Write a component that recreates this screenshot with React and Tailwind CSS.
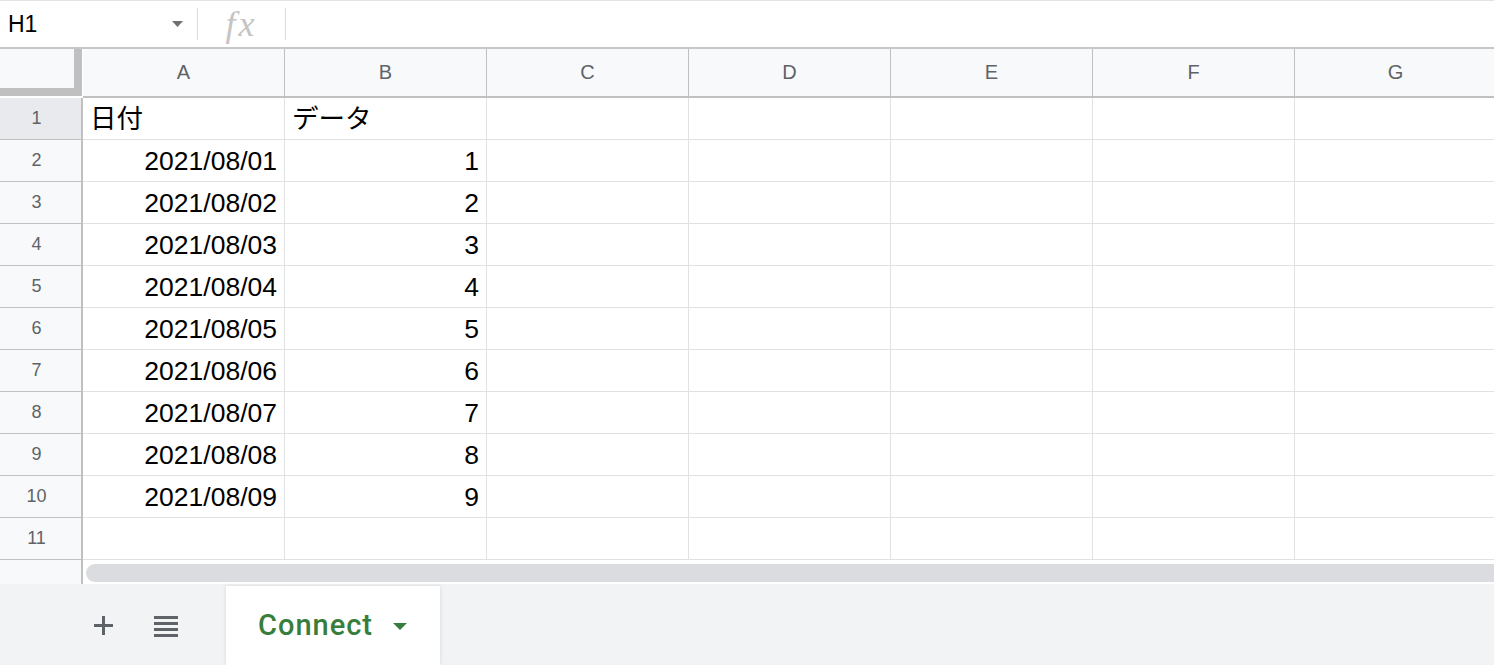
const columns = ['A', 'B', 'C', 'D', 'E', 'F', 'G']

const rows = [
  ['日付', 'データ'],
  ['2021/08/01', '1'],
  ['2021/08/02', '2'],
  ['2021/08/03', '3'],
  ['2021/08/04', '4'],
  ['2021/08/05', '5'],
  ['2021/08/06', '6'],
  ['2021/08/07', '7'],
  ['2021/08/08', '8'],
  ['2021/08/09', '9'],
  [],
]

function FormulaBar() {
  return (
    <div className="flex h-[49px] flex-none items-center border-t border-b-2 border-t-[#e3e3e3] border-b-[#c7c7c7] bg-white">
      <div className="flex w-[197px] items-center justify-between pl-[8px] pr-[14px]">
        <span className="text-[23px] text-black">H1</span>
        <svg width="11" height="6" viewBox="0 0 11 6">
          <path d="M0 0h11L5.5 6z" fill="#707070" />
        </svg>
      </div>
      <div className="h-[32px] w-px bg-[#dadce0]" />
      <div className="flex w-[87px] items-center justify-center">
        <span className="font-['Liberation_Serif',serif] text-[36px] italic leading-none tracking-[3px] text-[#c4c4c4]">fx</span>
      </div>
      <div className="h-[32px] w-px bg-[#dadce0]" />
    </div>
  )
}

function HeaderRow() {
  return (
    <div className="flex h-[49px] flex-none">
      <div className="w-[83px] flex-none bg-white pr-px">
        <div className="h-[47px] border-r-[8px] border-b-[8px] border-[#c0c0c0] bg-[#f8f9fa]" />
      </div>
      {columns.map(c => (
        <div
          key={c}
          className="flex w-[202px] flex-none items-center justify-center border-r border-b-2 border-r-[#c0c0c0] border-b-[#c0c0c0] bg-[#f8f9fa] pb-[1px] text-[20px] text-[#5f6368]"
        >
          {c}
        </div>
      ))}
    </div>
  )
}

function DataRow({ index, values }) {
  const selected = index === 1
  return (
    <div className="flex h-[42px] flex-none">
      <div
        className={`flex w-[83px] flex-none items-center justify-center border-r-2 border-b border-[#c0c0c0] pr-[8px] text-[18px] text-[#5f6368] ${selected ? 'bg-[#e8eaed]' : 'bg-[#f8f9fa]'}`}
      >
        {index}
      </div>
      {columns.map((c, i) => {
        const v = values[i]
        const isHeader = index === 1
        return (
          <div
            key={c}
            className={`flex w-[202px] flex-none items-center border-r border-b border-[#e0e1e2] px-[7px] pt-[2px] text-[26.5px] text-black ${isHeader ? 'justify-start' : 'justify-end'}`}
          >
            {v}
          </div>
        )
      })}
    </div>
  )
}

export default function App() {
  return (
    <div className="flex h-[665px] w-[1494px] flex-col overflow-hidden bg-white font-['Liberation_Sans','Noto_Sans_CJK_JP',Arial,sans-serif]">
      <FormulaBar />
      <HeaderRow />
      {rows.map((r, i) => (
        <DataRow key={i} index={i + 1} values={r} />
      ))}

      <div className="flex h-[24px] flex-none">
        <div className="w-[83px] flex-none border-r-2 border-[#c0c0c0] bg-[#f8f9fa]" />
        <div className="flex-1 bg-white pt-[4px] pl-[3px]">
          <div className="h-[18px] w-[1500px] rounded-l-full bg-[#dadce0]" />
        </div>
      </div>

      <div className="flex flex-1 items-stretch bg-[#f1f3f4] pt-[2px]">
        <div className="flex items-center">
          <svg className="ml-[94px]" width="19" height="19" viewBox="0 0 19 19">
            <rect x="8" y="0" width="3" height="19" fill="#5f6368" />
            <rect x="0" y="8" width="19" height="3" fill="#5f6368" />
          </svg>
          <svg className="ml-[41px]" width="24" height="22" viewBox="0 0 24 22">
            <rect x="0" y="1" width="24" height="3" fill="#5f6368" />
            <rect x="0" y="7" width="24" height="3" fill="#5f6368" />
            <rect x="0" y="13" width="24" height="3" fill="#5f6368" />
            <rect x="0" y="19" width="24" height="3" fill="#5f6368" />
          </svg>
        </div>
        <div className="ml-[48px] flex w-[214px] items-center bg-white pl-[32px] pt-[1px] shadow-[0_0_4px_rgba(0,0,0,0.12)]">
          <span className="font-['Roboto',Arial,sans-serif] text-[29px] font-medium tracking-[1px] text-[#377d3b]">Connect</span>
          <svg className="ml-[20px] mt-[1px]" width="14" height="7" viewBox="0 0 14 7">
            <path d="M0 0h14L7 7z" fill="#377d3b" />
          </svg>
        </div>
      </div>
    </div>
  )
}
